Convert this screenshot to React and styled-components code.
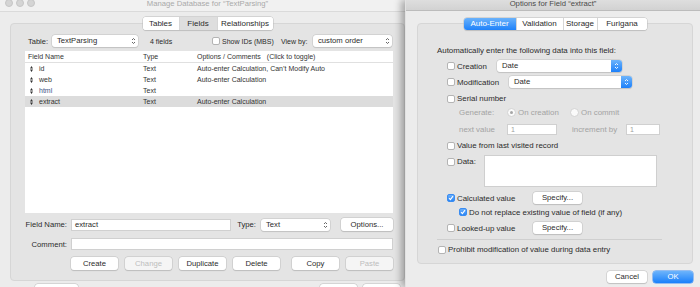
import styled, { createGlobalStyle } from 'styled-components'

const GlobalStyle = createGlobalStyle`
  html, body {
    margin: 0;
    padding: 0;
  }
  body {
    width: 700px;
    height: 287px;
    overflow: hidden;
    background: #ececec;
    font-family: 'Liberation Sans', Arial, sans-serif;
    color: #2b2b2b;
  }
  * {
    box-sizing: border-box;
  }
`

const Screen = styled.div`
  display: flex;
  width: 700px;
  height: 287px;
  overflow: hidden;
`

/* ---------- shared controls ---------- */

const Button = styled.div`
  flex-shrink: 0;
  width: ${(p) => p.$w}px;
  height: ${(p) => p.$h || 13}px;
  margin-left: ${(p) => p.$ml || 0}px;
  border-radius: 3px;
  background: ${(p) =>
    p.$primary ? 'linear-gradient(#6db4fb, #1a80fb)' : p.$disabled ? '#f5f5f5' : '#fff'};
  box-shadow: ${(p) =>
    p.$primary
      ? '0 0 0 0.5px #3c8ef5'
      : '0 0 0 0.5px #c2c2c2, 0 0.5px 1px rgba(0, 0, 0, 0.18)'};
  color: ${(p) => (p.$primary ? '#fff' : p.$disabled ? '#bdbdbd' : '#2b2b2b')};
  font-size: 7.7px;
  line-height: ${(p) => p.$h || 13}px;
  text-align: center;
  white-space: nowrap;
`

const Check = styled.span`
  flex-shrink: 0;
  width: 8px;
  height: 8px;
  border-radius: 2px;
  display: flex;
  align-items: center;
  justify-content: center;
  background: ${(p) => (p.$checked ? 'linear-gradient(#69aefa, #2a86f6)' : '#fff')};
  border: 1px solid ${(p) => (p.$checked ? '#3a8cf1' : '#b4b4b4')};
`

const CheckBox = ({ checked }) => (
  <Check $checked={checked}>
    {checked && (
      <svg width="6" height="6" viewBox="0 0 6 6">
        <path d="M1 3.2 L2.4 4.6 L5 1.2" fill="none" stroke="#fff" strokeWidth="1.1" />
      </svg>
    )}
  </Check>
)

const Radio = styled.span`
  flex-shrink: 0;
  width: 9px;
  height: 9px;
  border-radius: 50%;
  background: #fafafa;
  border: 1px solid #d3d3d3;
  display: flex;
  align-items: center;
  justify-content: center;
  &::after {
    content: '';
    width: 3px;
    height: 3px;
    border-radius: 50%;
    background: ${(p) => (p.$on ? '#a6a6a6' : 'transparent')};
  }
`

const Field = styled.div`
  flex-shrink: 0;
  width: ${(p) => (p.$w ? `${p.$w}px` : 'auto')};
  flex-grow: ${(p) => (p.$w ? 0 : 1)};
  height: ${(p) => p.$h || 12}px;
  margin-left: ${(p) => p.$ml || 0}px;
  background: #fff;
  border: 1px solid #d0d0d0;
  padding-left: 3px;
  font-size: ${(p) => p.$fs || 7.7}px;
  line-height: ${(p) => (p.$h || 12) - 2}px;
  color: ${(p) => (p.$muted ? '#a0a0a0' : '#2b2b2b')};
`

const SelectBox = styled.div`
  flex-shrink: 0;
  position: relative;
  width: ${(p) => p.$w}px;
  height: 12px;
  margin-left: ${(p) => p.$ml || 0}px;
  border-radius: 3px;
  background: #fff;
  box-shadow: 0 0 0 0.5px #c4c4c4, 0 0.5px 1px rgba(0, 0, 0, 0.15);
  padding-left: ${(p) => p.$pl || 5}px;
  font-size: 7.7px;
  line-height: 12px;
  display: flex;
  justify-content: space-between;
  overflow: hidden;
`

const Stepper = styled.span`
  width: ${(p) => (p.$blue ? 11 : 9)}px;
  height: 12px;
  display: flex;
  align-items: center;
  justify-content: center;
  background: ${(p) => (p.$blue ? 'linear-gradient(#6db4fb, #1c80fa)' : 'transparent')};
`

const Select = ({ w, ml, blue, children }) => (
  <SelectBox $w={w} $ml={ml}>
    <span>{children}</span>
    <Stepper $blue={blue}>
      <svg width="5" height="8" viewBox="0 0 5 8">
        <path
          d="M1 3 L2.5 1.5 L4 3 M1 5 L2.5 6.5 L4 5"
          fill="none"
          stroke={blue ? '#fff' : '#555'}
          strokeWidth="0.9"
        />
      </svg>
    </Stepper>
  </SelectBox>
)

const TabBar = styled.div`
  align-self: center;
  position: relative;
  z-index: 1;
  display: flex;
  height: ${(p) => p.$h}px;
  margin-bottom: -7px;
  border-radius: 3px;
  background: #fff;
  box-shadow: 0 0 0 0.5px #bdbdbd, 0 0.5px 1px rgba(0, 0, 0, 0.15);
  overflow: hidden;
`

const Tab = styled.div`
  width: ${(p) => p.$w}px;
  text-align: center;
  font-size: 8px;
  line-height: ${(p) => p.$h}px;
  color: ${(p) => (p.$active ? '#fff' : '#2b2b2b')};
  background: ${(p) =>
    p.$active ? 'linear-gradient(#6ab2fb, #1f82fa)' : p.$selected ? '#dedede' : '#fff'};
  & + & {
    border-left: 1px solid #d6d6d6;
  }
`

/* ---------- left window: Manage Database ---------- */

const LeftWindow = styled.div`
  flex-shrink: 0;
  width: 415px;
  display: flex;
  flex-direction: column;
  background: #ececec;
`

const TitleBar = styled.div`
  flex-shrink: 0;
  height: ${(p) => p.$h}px;
  display: grid;
  grid-template-columns: 1fr auto 1fr;
  align-items: start;
  overflow: hidden;
  background: ${(p) => (p.$active ? 'linear-gradient(#dedede, #d2d2d2)' : '#f1f1f1')};
  border-bottom: 1px solid ${(p) => (p.$active ? '#bcbcbc' : '#dadada')};
`

const Lights = styled.div`
  display: flex;
  gap: 3px;
  padding-left: 5px;
  margin-top: -1px;
`

const Light = styled.span`
  width: 8px;
  height: 8px;
  border-radius: 50%;
  background: #d5d5d5;
  border: 0.5px solid #c6c6c6;
`

const Title = styled.div`
  grid-column: 2;
  margin-top: -1px;
  font-size: 7.7px;
  line-height: 10px;
  white-space: nowrap;
  color: ${(p) => (p.$active ? '#4a4a4a' : '#a9a9a9')};
`

const LeftBody = styled.div`
  display: flex;
  flex-direction: column;
  padding: 5px 10px 0;
`

const Panel = styled.div`
  display: flex;
  flex-direction: column;
  background: #e4e4e4;
  border: 1px solid #d6d6d6;
  border-radius: 4px;
  padding: ${(p) => p.$pad};
`

const TableRow = styled.div`
  display: grid;
  grid-template-columns: 27px 86px 74px 69px 32px 79px;
  align-items: center;
  height: 12px;
  font-size: 7px;
`

const Label = styled.span`
  font-size: ${(p) => p.$fs || 7}px;
  white-space: nowrap;
  padding-left: ${(p) => p.$pl || 0}px;
  color: ${(p) => (p.$muted ? '#a6a6a6' : 'inherit')};
`

const Inline = styled.div`
  display: flex;
  align-items: center;
  gap: 2px;
  padding-left: ${(p) => p.$pl || 0}px;
`

const List = styled.div`
  margin-top: 4px;
  height: 162px;
  background: #fff;
  font-size: 7px;
`

const ListRow = styled.div`
  display: grid;
  grid-template-columns: 115px 54px 1fr;
  padding-left: 3px;
  height: ${(p) => (p.$head ? 12 : 11)}px;
  line-height: 11px;
  background: ${(p) => (p.$selected ? '#dcdcdc' : 'transparent')};
  border-bottom: ${(p) => (p.$head ? '1px solid #e0e0e0' : 'none')};
  color: #333;
  white-space: nowrap;
`

const NameCell = styled.span`
  display: flex;
  align-items: center;
  gap: 6px;
  padding-left: 2px;
  color: ${(p) => (p.$blue ? '#3d5686' : 'inherit')};
`

const Handle = () => (
  <svg width="3" height="6" viewBox="0 0 3 6">
    <path d="M1.5 0 L3 2.6 H0 Z M1.5 6 L0 3.4 H3 Z" fill="#333" />
  </svg>
)

const FormRow = styled.div`
  display: flex;
  align-items: center;
  height: ${(p) => p.$h}px;
  margin-top: ${(p) => p.$mt}px;
  padding-left: ${(p) => p.$pl || 0}px;
`

const FormLabel = styled.span`
  flex-shrink: 0;
  width: ${(p) => p.$w}px;
  padding-right: ${(p) => p.$pr || 0}px;
  text-align: right;
  font-size: 7.7px;
  white-space: nowrap;
`

const Footer = styled.div`
  display: flex;
  align-items: flex-start;
  margin-top: ${(p) => p.$mt}px;
  padding-left: ${(p) => p.$pl || 0}px;
  padding-right: ${(p) => p.$pr || 0}px;
  justify-content: ${(p) => (p.$end ? 'flex-end' : 'flex-start')};
  gap: ${(p) => p.$gap || 0}px;
`

const Spacer = styled.div`
  flex: 1;
`

const fields = [
  { name: 'id', type: 'Text', opts: 'Auto-enter Calculation, Can\u2019t Modify Auto' },
  { name: 'web', type: 'Text', opts: 'Auto-enter Calculation' },
  { name: 'html', type: 'Text', opts: '', blue: true },
  { name: 'extract', type: 'Text', opts: 'Auto-enter Calculation', selected: true },
]

const ManageDatabase = () => (
  <LeftWindow>
    <TitleBar $h={12}>
      <Lights>
        <Light />
        <Light />
        <Light />
      </Lights>
      <Title>Manage Database for “TextParsing”</Title>
    </TitleBar>
    <LeftBody>
      <TabBar $h={13}>
        <Tab $w={36} $h={13}>Tables</Tab>
        <Tab $w={38} $h={13} $selected>Fields</Tab>
        <Tab $w={56} $h={13}>Relationships</Tab>
      </TabBar>
      <Panel $pad="11px 11px 10px 14px">
        <TableRow>
          <Label $fs={7.5} $pl={3}>Table:</Label>
          <Select w={86}>TextParsing</Select>
          <Label $pl={12}>4 fields</Label>
          <Inline>
            <CheckBox />
            <Label>Show IDs (MBS)</Label>
          </Inline>
          <Label>View by:</Label>
          <Select w={79}>custom order</Select>
        </TableRow>

        <List>
          <ListRow $head>
            <span>Field Name</span>
            <span>Type</span>
            <span>
              Options / Comments<Label $pl={6}>(Click to toggle)</Label>
            </span>
          </ListRow>
          {fields.map((f) => (
            <ListRow key={f.name} $selected={f.selected}>
              <NameCell $blue={f.blue}>
                <Handle />
                {f.name}
              </NameCell>
              <span>{f.type}</span>
              <span>{f.opts}</span>
            </ListRow>
          ))}
        </List>

        <FormRow $h={13} $mt={5}>
          <FormLabel $w={42}>Field Name:</FormLabel>
          <Field $w={160} $ml={4}>extract</Field>
          <FormLabel $w={27} $pr={2}>Type:</FormLabel>
          <Select w={69} ml={3}>Text</Select>
          <Button $w={52} $ml={11}>Options...</Button>
        </FormRow>
        <FormRow $h={12} $mt={7}>
          <FormLabel $w={42}>Comment:</FormLabel>
          <Field $ml={4} />
        </FormRow>
        <FormRow $h={13} $mt={7} $pl={46}>
          <Button $w={47}>Create</Button>
          <Button $w={47} $ml={7} $disabled>Change</Button>
          <Button $w={47} $ml={7}>Duplicate</Button>
          <Button $w={47} $ml={7}>Delete</Button>
          <Button $w={47} $ml={12}>Copy</Button>
          <Button $w={47} $ml={7} $disabled>Paste</Button>
        </FormRow>
      </Panel>
      {/* only the tops of the window's own buttons show below the panel */}
      <Footer $mt={3} $pl={25} $pr={5}>
        <Button $w={43} />
        <Spacer />
        <Button $w={37} />
        <Button $w={37} $ml={6} />
      </Footer>
    </LeftBody>
  </LeftWindow>
)

/* ---------- right window: Options for Field ---------- */

const RightWindow = styled.div`
  flex-shrink: 0;
  position: relative;
  z-index: 2;
  width: 295px;
  margin-left: -10px;
  display: flex;
  flex-direction: column;
  background: #ececec;
  border-left: 1px solid #e2e2e2;
  box-shadow: -4px 0 7px rgba(0, 0, 0, 0.3);
`

const RightBody = styled.div`
  display: flex;
  flex-direction: column;
  padding: 7px 7px 0 11px;
`

const OptLine = styled.div`
  display: flex;
  align-items: ${(p) => (p.$top ? 'flex-start' : 'center')};
  height: ${(p) => p.$h}px;
  margin-top: ${(p) => p.$mt}px;
  padding-left: ${(p) => p.$pl || 0}px;
  font-size: 7.9px;
  white-space: nowrap;
`

const Slot = styled.div`
  flex-shrink: 0;
  display: flex;
  align-items: center;
  gap: 2px;
  width: ${(p) => p.$w}px;
  margin-left: ${(p) => p.$ml || 0}px;
  padding-top: ${(p) => p.$pt || 0}px;
  color: ${(p) => (p.$muted ? '#a3a3a3' : 'inherit')};
`

const DataBox = styled.div`
  width: 173px;
  height: 32px;
  background: #fff;
  border: 1px solid #cfcfcf;
`

const Separator = styled.div`
  width: 225px;
  height: 1px;
  margin-top: 5px;
  background: #cfcfcf;
`

const FieldOptions = () => (
  <RightWindow>
    <TitleBar $h={11} $active>
      <Title $active>Options for Field “extract”</Title>
    </TitleBar>
    <RightBody>
      <TabBar $h={12}>
        <Tab $w={52} $h={12} $active>Auto-Enter</Tab>
        <Tab $w={47} $h={12}>Validation</Tab>
        <Tab $w={34} $h={12}>Storage</Tab>
        <Tab $w={50} $h={12}>Furigana</Tab>
      </TabBar>
      <Panel $pad="21px 0 8px 19px">
        <OptLine $h={10} $mt={0}>
          Automatically enter the following data into this field:
        </OptLine>
        <OptLine $h={12} $mt={5} $pl={10}>
          <Slot $w={50}>
            <CheckBox />
            Creation
          </Slot>
          <Select w={125} blue>Date</Select>
        </OptLine>
        <OptLine $h={12} $mt={4} $pl={10}>
          <Slot $w={62}>
            <CheckBox />
            Modification
          </Slot>
          <Select w={123} blue>Date</Select>
        </OptLine>
        <OptLine $h={11} $mt={5} $pl={10}>
          <Slot $w={100}>
            <CheckBox />
            Serial number
          </Slot>
        </OptLine>
        <OptLine $h={11} $mt={3} $pl={22}>
          <Slot $w={48} $muted>Generate:</Slot>
          <Slot $w={63} $muted>
            <Radio $on />
            On creation
          </Slot>
          <Slot $w={70} $muted>
            <Radio />
            On commit
          </Slot>
        </OptLine>
        <OptLine $h={11} $mt={6} $pl={22}>
          <Slot $w={48} $muted>next value</Slot>
          <Field $w={50} $h={11} $fs={7} $muted>1</Field>
          <Slot $w={54} $ml={15} $muted>increment by</Slot>
          <Field $w={34} $h={11} $fs={7} $muted>1</Field>
        </OptLine>
        <OptLine $h={11} $mt={5} $pl={10}>
          <Slot $w={160}>
            <CheckBox />
            Value from last visited record
          </Slot>
        </OptLine>
        <OptLine $h={32} $mt={4} $pl={10} $top>
          <Slot $w={37} $pt={2}>
            <CheckBox />
            Data:
          </Slot>
          <DataBox />
        </OptLine>
        <OptLine $h={12} $mt={5} $pl={10}>
          <Slot $w={86}>
            <CheckBox checked />
            Calculated value
          </Slot>
          <Button $w={49} $h={12}>Specify...</Button>
        </OptLine>
        <OptLine $h={10} $mt={3} $pl={22}>
          <Slot $w={200}>
            <CheckBox checked />
            Do not replace existing value of field (if any)
          </Slot>
        </OptLine>
        <OptLine $h={12} $mt={5} $pl={10}>
          <Slot $w={86}>
            <CheckBox />
            Looked-up value
          </Slot>
          <Button $w={49} $h={12}>Specify...</Button>
        </OptLine>
        <Separator />
        <OptLine $h={11} $mt={4} $pl={1}>
          <Slot $w={220}>
            <CheckBox />
            Prohibit modification of value during data entry
          </Slot>
        </OptLine>
      </Panel>
      <Footer $mt={7} $end $gap={6}>
        <Button $w={40} $h={12}>Cancel</Button>
        <Button $w={40} $h={12} $primary>OK</Button>
      </Footer>
    </RightBody>
  </RightWindow>
)

const App = () => (
  <>
    <GlobalStyle />
    <Screen>
      <ManageDatabase />
      <FieldOptions />
    </Screen>
  </>
)

export default App
